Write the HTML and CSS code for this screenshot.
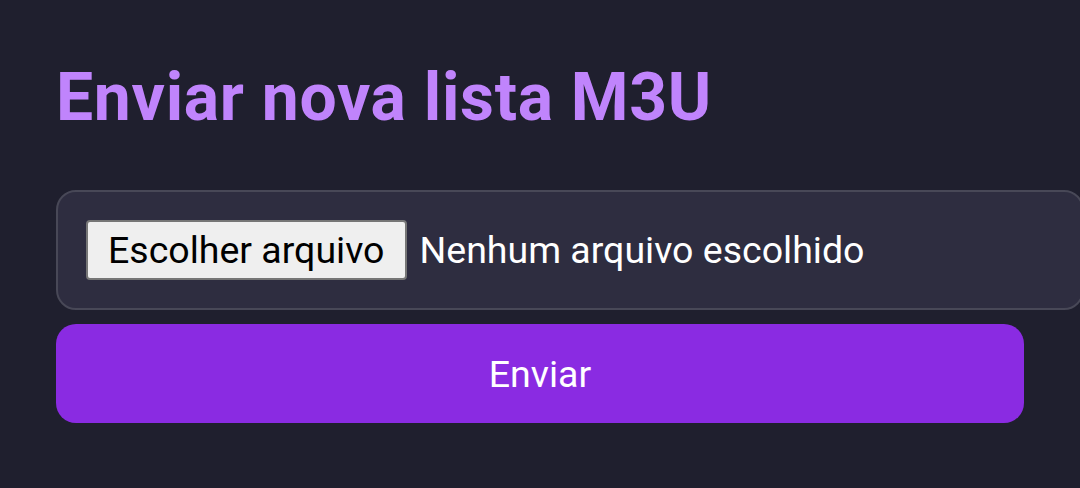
FILE: index.html
```html
<!DOCTYPE html>
<html>
<head>
    <title>Enviar lista</title>
    <meta charset="UTF-8">
    <meta name="viewport" content="width=device-width, initial-scale=1">
    <link rel="stylesheet" href="styles.css">
</head>
<body>
    <div class="container">
        <h1>Enviar nova lista M3U</h1>
        <form class="upload-form">
            <label class="file-box">
                <span class="file-button">Escolher arquivo</span>
                <span class="file-name">Nenhum arquivo escolhido</span>
            </label>
            <button type="submit" class="send">Enviar</button>
        </form>
    </div>
</body>
</html>
```

FILE: styles.css
```css
body {
    margin: 0;
    background: #1f1f2e;
    color: #fff;
    font-family: Roboto, "Noto Sans", sans-serif;
    overflow: hidden;
}
.container {
    width: 968px;
    padding: 56px 56px 0;
}
h1 {
    margin: 0 0 50px;
    color: #c084fc;
    font-size: 66px;
    font-weight: 700;
    line-height: 84px;
    letter-spacing: 0.7px;
}
.upload-form {
    display: block;
}
.file-box {
    display: flex;
    align-items: center;
    width: 100%;
    height: 60px;
    padding: 28px 28px;
    background: #2e2d40;
    border: 2px solid #484857;
    border-radius: 20px;
    margin-bottom: 14px;
}
.file-button {
    background: #efefef;
    color: #000;
    border: 2px solid #767676;
    border-radius: 4px;
    font-size: 37.5px;
    line-height: 38px;
    padding: 9px 20px;
    margin-right: 13px;
}
.file-name {
    font-size: 37.5px;
    color: #fff;
}
.send {
    display: block;
    width: 100%;
    height: 99px;
    background: #8a2be2;
    color: #fff;
    border: 0;
    border-radius: 20px;
    font-family: Roboto, "Noto Sans", sans-serif;
    font-size: 37.5px;
}
```
